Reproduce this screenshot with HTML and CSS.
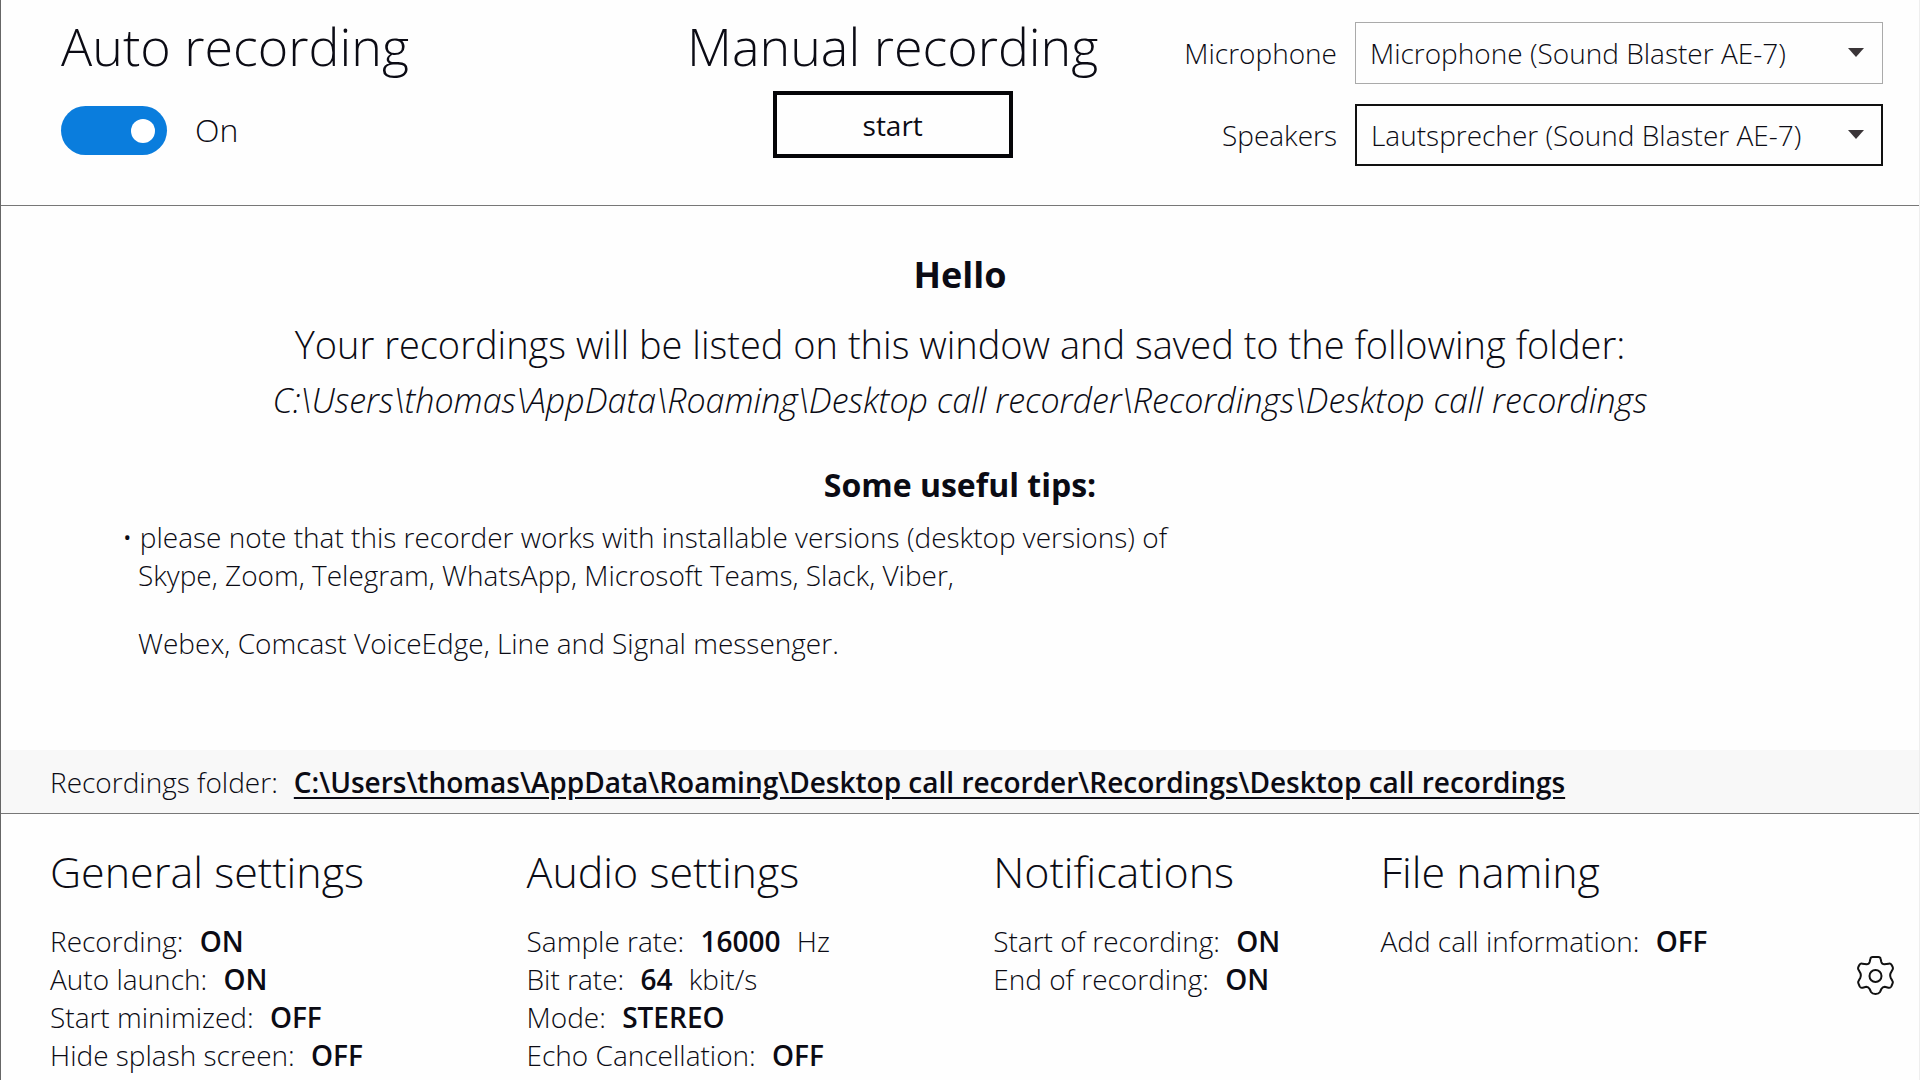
FILE: index.html
```
<!DOCTYPE html>
<html lang="en">
<head>
  <meta charset="UTF-8">
  <meta name="viewport" content="width=device-width, initial-scale=1.0">
  <title>Desktop call recorder</title>
  <link rel="stylesheet" href="styles.css">
</head>
<body>
  <header class="topbar">
    <section class="auto">
      <h1 class="title">Auto recording</h1>
      <div class="switch">
        <input type="checkbox" id="autoRecording" class="toggle" checked>
        <label for="autoRecording">On</label>
      </div>
    </section>

    <section class="manual">
      <h1 class="title">Manual recording</h1>
      <button type="button" class="start-btn">start</button>
    </section>

    <section class="devices">
      <label for="microphone">Microphone</label>
      <div class="select-box">
        <select id="microphone">
          <option>Microphone (Sound Blaster AE-7)</option>
        </select>
      </div>
      <label for="speakers">Speakers</label>
      <div class="select-box active">
        <select id="speakers">
          <option>Lautsprecher (Sound Blaster AE-7)</option>
        </select>
      </div>
    </section>
  </header>

  <main class="content">
    <h2 class="hello">Hello</h2>
    <p class="intro">Your recordings will be listed on this window and saved to the following folder:</p>
    <p class="path">C:\Users\thomas\AppData\Roaming\Desktop call recorder\Recordings\Desktop call recordings</p>
    <h3 class="tips-title">Some useful tips:</h3>
    <div class="tips">
      <p class="tip-first">• please note that this recorder works with installable versions (desktop versions) of</p>
      <p>Skype, Zoom, Telegram, WhatsApp, Microsoft Teams, Slack, Viber,</p>
      <p class="tip-last">Webex, Comcast VoiceEdge, Line and Signal messenger.</p>
    </div>
  </main>

  <div class="folder-bar">
    <span>Recordings folder:</span>
    <a href="#">C:\Users\thomas\AppData\Roaming\Desktop call recorder\Recordings\Desktop call recordings</a>
  </div>

  <footer class="settings">
    <section>
      <h2>General settings</h2>
      <ul>
        <li>Recording: <b>ON</b></li>
        <li>Auto launch: <b>ON</b></li>
        <li>Start minimized: <b>OFF</b></li>
        <li>Hide splash screen: <b>OFF</b></li>
      </ul>
    </section>
    <section>
      <h2>Audio settings</h2>
      <ul>
        <li>Sample rate: <b>16000</b> Hz</li>
        <li>Bit rate: <b>64</b> kbit/s</li>
        <li>Mode: <b>STEREO</b></li>
        <li>Echo Cancellation: <b>OFF</b></li>
      </ul>
    </section>
    <section>
      <h2>Notifications</h2>
      <ul>
        <li>Start of recording: <b>ON</b></li>
        <li>End of recording: <b>ON</b></li>
      </ul>
    </section>
    <section>
      <h2>File naming</h2>
      <ul>
        <li>Add call information: <b>OFF</b></li>
      </ul>
    </section>
    <button type="button" class="gear" aria-label="Settings">
      <svg viewBox="52 48 111 117" width="37" height="39" fill="none" stroke="#111" stroke-width="6" stroke-linejoin="round">
        <path d="M99 51h17q6 0 7 6l2 9q2 7 9 7l13-2q6-1 9 4l3 6q2 5-1 9l-5 9q-3 7 0 14l5 9q3 5 0 10l-3 7q-3 6-9 4l-11-3q-6 0-10 7l-4 9q-4 6-13.500 6q-9.500 0-13.500-6l-4-9q-4-7-10-7l-11 3q-6 2-9-4l-3-7q-3-5 0-10l5-9q3-7 0-14l-5-9q-3-4-1-9l3-6q3-5 9-4l13 2q7 0 9-7l2-9q1-6 7-6z"/>
        <circle cx="107.500" cy="108" r="18"/>
      </svg>
    </button>
  </footer>
</body>
</html>
```
FILE: styles.css
```
* {
  box-sizing: border-box;
}

html, body {
  margin: 0;
  padding: 0;
}

body {
  min-height: 100vh;
  display: flex;
  flex-direction: column;
  border-left: 1px solid #666;
  border-right: 1px solid #eee;
  background: #fefefe;
  color: #0b0b14;
  font-family: "Open Sans", "Segoe UI", sans-serif;
  font-size: 28px;
  font-weight: 300;
}

h1, h2, h3, p, ul {
  margin: 0;
  padding: 0;
  font-weight: 300;
}

button, select {
  font: inherit;
  color: inherit;
}

/* top bar */
.topbar {
  display: grid;
  grid-template-columns: 1fr auto auto;
  column-gap: 86px;
  height: 206px;
  padding: 16px 36px 0 60px;
  border-bottom: 1px solid #777;
}

.title {
  font-size: 52px;
  line-height: 60px;
}

.switch {
  display: flex;
  align-items: center;
  gap: 28px;
  margin-top: 29px;
  font-size: 32px;
  line-height: 50px;
}

.toggle {
  appearance: none;
  position: relative;
  width: 106px;
  height: 49px;
  margin: 0;
  border-radius: 25px;
  background: #0a7ddd;
}

.toggle::before {
  content: '';
  position: absolute;
  top: 13px;
  right: 12px;
  width: 24px;
  height: 24px;
  border-radius: 50%;
  background: #fff;
}

.manual {
  display: flex;
  flex-direction: column;
  align-items: center;
}

.start-btn {
  width: 240px;
  height: 67px;
  margin-top: 15px;
  border: 4px solid #050508;
  background: #fefefe;
  font-weight: 400;
}

.devices {
  display: grid;
  grid-template-columns: auto 27.5vw;
  gap: 20px 18px;
  align-content: start;
  align-items: center;
  padding-top: 6px;
}

.devices label {
  text-align: right;
}

.select-box {
  position: relative;
}

.select-box select {
  appearance: none;
  display: block;
  width: 100%;
  height: 62px;
  padding: 0 60px 0 14px;
  border: 1px solid #aaa;
  border-radius: 0;
  background: #fefefe;
}

.select-box.active select {
  border: 2px solid #111;
}

.select-box::after {
  content: '';
  position: absolute;
  top: 26px;
  right: 19px;
  width: 16px;
  height: 9px;
  background: #3a3538;
  clip-path: polygon(0 0, 100% 0, 50% 100%);
  pointer-events: none;
}

/* welcome text */
.content {
  flex: 1;
  padding-top: 44px;
  text-align: center;
}

.hello {
  font-size: 36px;
  font-weight: 700;
  line-height: 50px;
}

.intro {
  margin-top: 14px;
  font-size: 38px;
  line-height: 60px;
}

.path {
  font-size: 34px;
  font-style: italic;
  line-height: 52px;
}

.tips-title {
  margin-top: 34px;
  font-size: 32px;
  font-weight: 700;
  line-height: 50px;
}

.tips {
  padding: 8px 0 0 137px;
  text-align: left;
  line-height: 38px;
}

.tip-first {
  text-indent: -16px;
}

.tip-last {
  margin-top: 30px;
}

/* folder link */
.folder-bar {
  display: flex;
  align-items: center;
  gap: 16px;
  height: 64px;
  padding-left: 49px;
  border-bottom: 1px solid #777;
  background: #f8f8f8;
}

.folder-bar a {
  color: inherit;
  font-weight: 600;
  text-underline-offset: 4px;
}

/* settings */
.settings {
  display: grid;
  grid-template-columns: 48fr 47fr 39fr 48fr auto;
  height: 266px;
  padding: 28px 25px 0 49px;
}

.settings h2 {
  font-size: 43px;
  line-height: 60px;
}

.settings ul {
  margin-top: 20px;
  list-style: none;
  line-height: 38px;
}

.settings b {
  margin: 0 9px;
  font-weight: 600;
}

.gear {
  align-self: start;
  margin-top: 114px;
  padding: 0;
  border: none;
  background: none;
}

.gear svg {
  display: block;
}
```
